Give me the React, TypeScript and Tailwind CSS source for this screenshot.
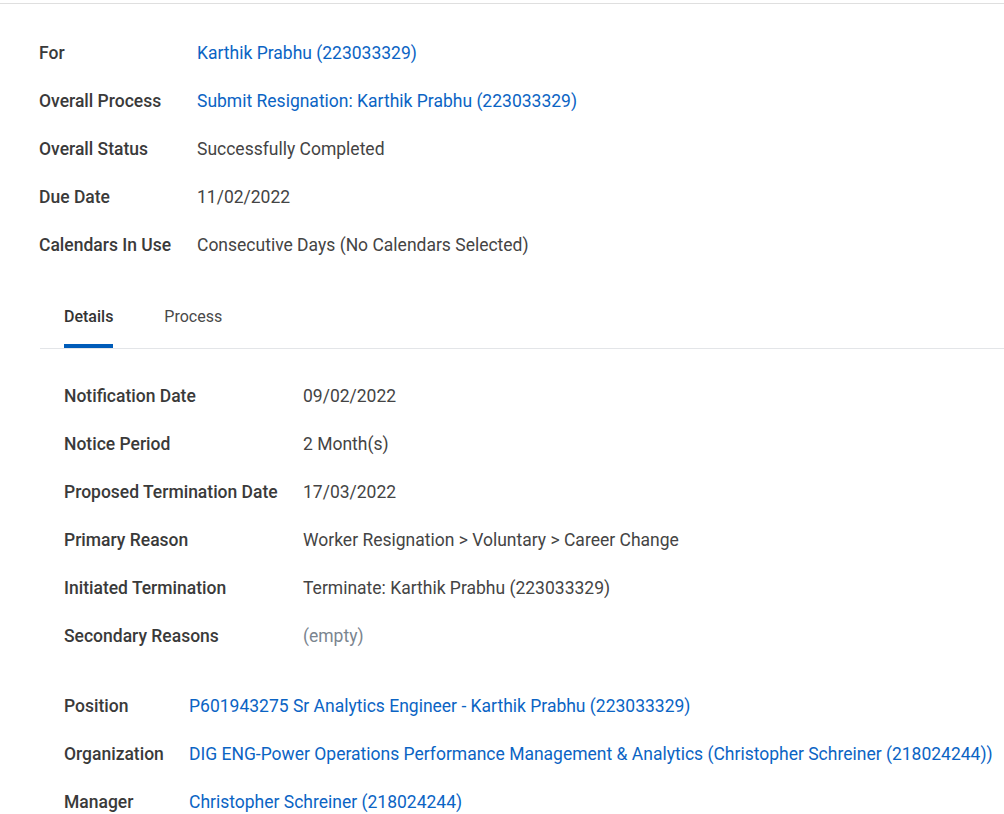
import React from 'react';

type Row = { label: string; value: string; kind?: 'link' | 'muted' };

const summary: Row[] = [
  { label: 'For', value: 'Karthik Prabhu (223033329)', kind: 'link' },
  { label: 'Overall Process', value: 'Submit Resignation: Karthik Prabhu (223033329)', kind: 'link' },
  { label: 'Overall Status', value: 'Successfully Completed' },
  { label: 'Due Date', value: '11/02/2022' },
  { label: 'Calendars In Use', value: 'Consecutive Days (No Calendars Selected)' },
];

const details: Row[] = [
  { label: 'Notification Date', value: '09/02/2022' },
  { label: 'Notice Period', value: '2 Month(s)' },
  { label: 'Proposed Termination Date', value: '17/03/2022' },
  { label: 'Primary Reason', value: 'Worker Resignation > Voluntary > Career Change' },
  { label: 'Initiated Termination', value: 'Terminate: Karthik Prabhu (223033329)' },
  { label: 'Secondary Reasons', value: '(empty)', kind: 'muted' },
];

const position: Row[] = [
  { label: 'Position', value: 'P601943275 Sr Analytics Engineer - Karthik Prabhu (223033329)', kind: 'link' },
  {
    label: 'Organization',
    value: 'DIG ENG-Power Operations Performance Management & Analytics (Christopher Schreiner (218024244))',
    kind: 'link',
  },
  { label: 'Manager', value: 'Christopher Schreiner (218024244)', kind: 'link' },
];

const valueClass = (kind?: Row['kind']) =>
  kind === 'link'
    ? 'text-[#0b64c4] cursor-pointer hover:underline'
    : kind === 'muted'
    ? 'text-[#7b858f]'
    : 'text-[#444444]';

const FieldList: React.FC<{ rows: Row[]; labelWidth: string }> = ({ rows, labelWidth }) => (
  <div className="flex flex-col">
    {rows.map((r) => (
      <div key={r.label} className="flex h-12 items-center whitespace-nowrap">
        <span className={`${labelWidth} shrink-0 font-medium text-[#3a3a3a]`}>{r.label}</span>
        <span className={valueClass(r.kind)}>{r.value}</span>
      </div>
    ))}
  </div>
);

export default function App() {
  return (
    <div className="h-[814px] w-[1004px] overflow-hidden bg-white font-['Roboto','Liberation_Sans',sans-serif] text-[17.5px] leading-5">
      <div className="mt-[3px] h-px bg-[#dfdfdf]" />

      <div className="pl-[39px] pt-[25px]">
        <FieldList rows={summary} labelWidth="w-[158px]" />
      </div>

      {/* Tabs */}
      <div className="ml-[40px] mt-[38px] flex gap-[51px] border-b border-[#e3e5e8] pl-6 text-[16px]">
        <div className="flex flex-col">
          <span className="font-medium text-[#333333]">Details</span>
          <span className="mt-[17px] h-1 w-full bg-[#005cb9]" />
        </div>
        <div className="flex flex-col">
          <span className="text-[#494949]">Process</span>
        </div>
      </div>

      <div className="pl-16 pt-[23px]">
        <FieldList rows={details} labelWidth="w-[239px]" />
        <div className="mt-[22px]">
          <FieldList rows={position} labelWidth="w-[125px]" />
        </div>
      </div>
    </div>
  );
}
